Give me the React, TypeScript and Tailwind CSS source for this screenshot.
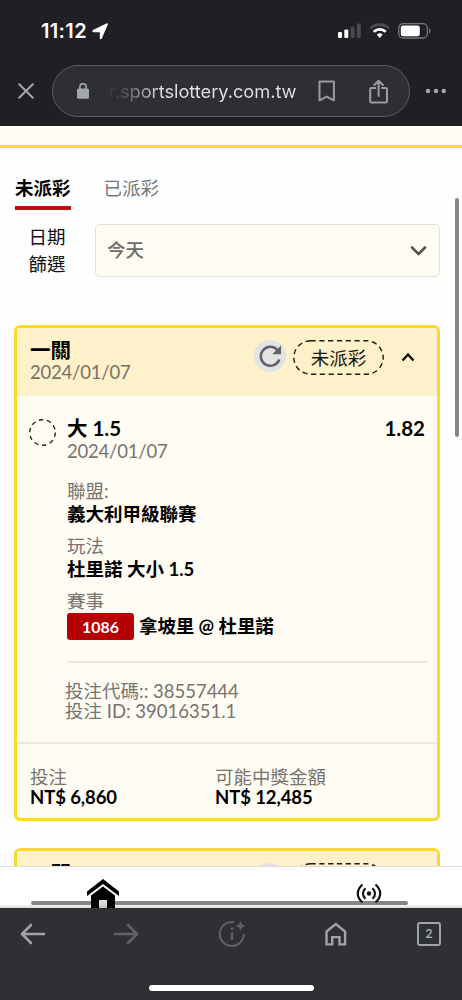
import React from "react";

function StatusBar() {
  return (
    <div className="flex h-[65px] items-start justify-between pl-[41px] pr-[31px] pt-[22px]">
      <div className="flex items-center gap-[5px]">
        <span className="w-[46px] whitespace-nowrap font-['Inter',sans-serif] text-[20px] font-semibold leading-[18px] tracking-[0.35px] text-white">11:12</span>
        <svg width="16" height="17" viewBox="0 0 16 17" fill="#fff">
          <path d="M15.800 1.500 9.800 15.600c-.5 1.100-2 .8-2-.4V9.200H1.600C.2 9.200-.1 7.500 1 7L14.400 .5c1-.4 1.800.2 1.400 1Z" />
        </svg>
      </div>
      <div className="flex items-center">
        <svg width="93" height="18" viewBox="0 0 93 18">
          <rect x="0" y="10" width="4" height="6" rx="1.200" fill="#fff" />
          <rect x="6.300" y="7.500" width="4" height="8.500" rx="1.200" fill="#fff" />
          <rect x="12.500" y="4.500" width="4" height="11.500" rx="1.200" fill="#4b4b4f" />
          <rect x="18.800" y="1.500" width="4" height="14.500" rx="1.200" fill="#4b4b4f" />
          <path d="M32.500 6.200a13.500 13.500 0 0 1 18.500 0" fill="none" stroke="#4b4b4f" strokeWidth="2.800" />
          <path d="M35.700 9.700a9 9 0 0 1 12.100 0" fill="none" stroke="#fff" strokeWidth="2.800" />
          <path d="m41.750 16-3-3.400a4.500 4.500 0 0 1 6 0Z" fill="#fff" />
          <rect x="60.800" y="1.700" width="28.500" height="14.300" rx="4.200" fill="none" stroke="#77777b" strokeWidth="1.300" />
          <rect x="62.800" y="3.500" width="19" height="10.700" rx="2.500" fill="#fff" />
          <path d="M91 6.300c2 .8 2 4.300 0 5.100Z" fill="#77777b" />
        </svg>
      </div>
    </div>
  );
}

function AddressBar() {
  return (
    <div className="flex h-[52px] items-center">
      <svg className="ml-[18px]" width="16" height="16" viewBox="0 0 16 16" stroke="#a3a6ab" strokeWidth="2" strokeLinecap="round">
        <path d="m1.200 1.200 13.600 13.600M14.800 1.200 1.200 14.800" />
      </svg>
      <div className="ml-[18px] flex h-[52px] w-[358px] items-center rounded-full border border-[#5a5c60] bg-[#2e2f33]">
        <svg className="ml-[24px]" width="12" height="16" viewBox="0 0 12 16">
          <rect y="5.500" width="12" height="10.300" rx="1.500" fill="#a3a6ad" />
          <path d="M2.900 6V3.800a3.100 3.100 0 0 1 6.200 0V6" fill="none" stroke="#a3a6ad" strokeWidth="1.600" />
        </svg>
        <span className="ml-[20px] w-[188px] whitespace-nowrap bg-[linear-gradient(90deg,#34353a_0px,#505156_14px,#d5d6d9_48px,#e2e3e6_60px)] bg-clip-text font-['Inter',sans-serif] text-[18.3px] leading-[26px] tracking-[-0.05px] text-transparent">r.sportslottery.com.tw</span>
        <svg className="ml-[20px]" width="20" height="22" viewBox="0 0 20 22" fill="none" stroke="#9a9ca2" strokeWidth="2">
          <path d="M2.500 1.500h14.400v18.800l-7.200-3.700-7.200 3.700Z" strokeLinejoin="round" />
        </svg>
        <svg className="ml-[32px]" width="20" height="25" viewBox="0 0 20 25" fill="none" stroke="#9a9ca2" strokeWidth="2" strokeLinecap="round" strokeLinejoin="round">
          <path d="M6.300 9H2.500a1.300 1.300 0 0 0-1.300 1.300v12A1.300 1.300 0 0 0 2.500 23.600h14.200a1.300 1.300 0 0 0 1.300-1.300v-12A1.300 1.300 0 0 0 16.700 9h-3.800M9.600 17V2M5.300 6l4.300-4.300L13.900 6" />
        </svg>
      </div>
      <svg className="ml-[15px]" width="22" height="6" viewBox="0 0 22 6" fill="#a3a6ab">
        <circle cx="3" cy="3" r="2.200" />
        <circle cx="11" cy="3" r="2.200" />
        <circle cx="18.800" cy="3" r="2.200" />
      </svg>
    </div>
  );
}

function TicketHeader({ title, date }: { title: string; date: string }) {
  return (
    <div className="flex h-[68px] bg-[#fff1c9] pl-[13px]">
      <div className="w-[224px] pt-[10px]">
        <p className="text-[20.5px] font-bold leading-[24px] text-black">{title}</p>
        <p className="text-[18.5px] leading-[20px] tracking-[-0.2px] text-[#77726a]">{date}</p>
      </div>
      <div className="mt-[12px] flex size-[32px] items-center justify-center rounded-full bg-[#e3e3e5]">
        <svg width="24" height="24" viewBox="0 0 24 24" fill="none" stroke="#606164" strokeWidth="2.500">
          <path d="M19.300 5.800A9.500 9.500 0 1 0 21.300 15.500" />
          <path d="M23 1.500v8.700h-8.700Z" fill="#606164" stroke="none" />
        </svg>
      </div>
      <div className="relative ml-[7px] mt-[12px] flex h-[35px] w-[91px] items-center justify-center">
        <svg className="absolute inset-0" width="91" height="35" fill="none" stroke="#1e1b15" strokeWidth="1.400">
          <rect x=".8" y=".8" width="89.400" height="33.400" rx="16.700" strokeDasharray="5.200 3.600" />
        </svg>
        <span className="text-[18.5px] leading-[34px] text-[#191714]">未派彩</span>
      </div>
      <svg className="ml-[17px] mt-[23.5px]" width="14" height="10" viewBox="0 0 14 10" fill="none" stroke="#111" strokeWidth="2.500">
        <path d="m1.500 8.500 5.500-6 5.500 6" />
      </svg>
    </div>
  );
}

function Field({ label, value }: { label: string; value: string }) {
  return (
    <div className="h-[54.5px]">
      <p className="text-[18.5px] leading-[23px] text-[#77736f]">{label}</p>
      <p className="text-[18.5px] font-bold leading-[23px] text-black">{value}</p>
    </div>
  );
}

function Ticket() {
  return (
    <article className="h-[496px] overflow-hidden rounded-[6px] border-[3px] border-[#fdd835] bg-[#fffcf3]">
      <TicketHeader title="一關" date="2024/01/07" />
      <section className="flex h-[346px] pl-[10px] pt-[19px]">
        <svg className="mt-[2px] shrink-0" width="30" height="30" fill="none" stroke="#222" strokeWidth="1.400">
          <circle cx="15.500" cy="15.500" r="12.800" strokeDasharray="4.400 3.640" />
        </svg>
        <div className="ml-[10px] w-[361px]">
          <div className="flex justify-between pr-[3px] text-[20.5px] font-bold leading-[26px] text-black">
            <span>大 1.5</span>
            <span>1.82</span>
          </div>
          <p className="text-[18.5px] leading-[20px] tracking-[-0.2px] text-[#77736f]">2024/01/07</p>
          <div className="mt-[19px]">
            <Field label="聯盟:" value="義大利甲級聯賽" />
            <Field label="玩法" value="杜里諾 大小 1.5" />
            <p className="text-[18.5px] leading-[24px] text-[#77736f]">賽事</p>
            <div className="flex items-center">
              <span className="h-[27px] w-[67px] rounded-[3px] bg-[#b60004] text-center text-[16px] font-bold leading-[28px] text-white">1086</span>
              <span className="ml-[5px] text-[18.5px] font-bold leading-[27px] tracking-[-0.1px] text-black">拿坡里 @ 杜里諾</span>
            </div>
          </div>
          <hr className="mt-[21px] border-t-2 border-[#ebe8e3]" />
          <div className="-ml-[2px] mt-[18px] text-[18.5px] leading-[20px] text-[#77736f]">
            <p>投注代碼:: 38557444</p>
            <p>投注 ID: 39016351.1</p>
          </div>
        </div>
      </section>
      <footer className="flex h-[76px] border-t-2 border-[#ebe8e3] pl-[13px] pt-[23px]">
        <div className="w-[185px]">
          <p className="text-[18.5px] leading-[20px] text-[#77736f]">投注</p>
          <p className="text-[18.5px] font-bold leading-[20px] tracking-[-0.1px] text-black">NT$ 6,860</p>
        </div>
        <div>
          <p className="text-[18.5px] leading-[20px] text-[#77736f]">可能中獎金額</p>
          <p className="text-[18.5px] font-bold leading-[20px] tracking-[-0.1px] text-black">NT$ 12,485</p>
        </div>
      </footer>
    </article>
  );
}

function SiteNav() {
  return (
    <div className="relative h-[42px] overflow-hidden border-t border-[#dededf] bg-white">
      <div className="absolute left-[31px] top-[33.5px] h-[4px] w-[377px] rounded-full bg-[#858585]" />
      <div className="relative flex pl-[86px] pt-[12px]">
        <svg width="34" height="32" viewBox="0 0 34 32">
          <path d="M17 0 33 12.500V17L17 5 1 17v-4.500Z" fill="#000" />
          <path d="M17 7.500 29 16.500V32H5V16.500Z" fill="#000" />
          <rect x="13" y="21" width="8" height="11" fill="#ddd" />
        </svg>
        <svg className="ml-[236px] mt-[4px]" width="26" height="22" viewBox="0 0 26 22" fill="none" stroke="#111" strokeWidth="2.200">
          <path d="M6.500 1.500C.2 7 .2 14 6.500 19.500M19.500 1.500c6.300 5.500 6.300 12.500 0 18M9.500 5.300c-3.400 3.200-3.400 7.200 0 10.400M16.500 5.300c3.400 3.200 3.400 7.200 0 10.400" />
          <circle cx="13" cy="10.500" r="2.200" fill="#111" stroke="none" />
        </svg>
      </div>
      <div className="absolute inset-x-0 bottom-0 h-[4px] bg-gradient-to-b from-transparent to-black/15" />
    </div>
  );
}

function Toolbar() {
  return (
    <div className="flex h-[92px] flex-col items-center justify-between bg-[#2f3034] pb-[9px]">
      <div className="flex h-[52px] w-full items-center pl-[20px]">
        <svg width="26" height="22" viewBox="0 0 26 22" fill="none" stroke="#a1a3a8" strokeWidth="2.600" strokeLinecap="round" strokeLinejoin="round">
          <path d="M24 11H2.500M11 2 2 11l9 9" />
        </svg>
        <svg className="ml-[67px]" width="26" height="22" viewBox="0 0 26 22" fill="none" stroke="#606166" strokeWidth="2.600" strokeLinecap="round" strokeLinejoin="round">
          <path d="M2 11h21.500M15 2l9 9-9 9" />
        </svg>
        <svg className="ml-[79px]" width="28" height="28" viewBox="0 0 28 28" fill="none" stroke="#606166" strokeWidth="2">
          <path d="M16 2.200A12 12 0 1 0 25.800 14" />
          <path d="M14 12.500v7.500" strokeWidth="2.500" />
          <path d="M14 7.500v2.500" strokeWidth="2.500" />
          <path d="m22.500 1 1.400 3.600L27.500 6l-3.600 1.400-1.400 3.600-1.400-3.600L17.500 6l3.600-1.400Z" fill="#606166" stroke="none" />
        </svg>
        <svg className="ml-[78px]" width="24" height="24" viewBox="0 0 24 24" fill="none" stroke="#a1a3a8" strokeWidth="2.400">
          <path d="M2.500 9.500 11.800 2l9.300 7.500v12.900h-5.600v-7.300H8.200v7.300H2.500Z" />
        </svg>
        <div className="ml-[69px] flex size-[24px] items-center justify-center rounded-[3px] border-2 border-[#a1a3a8] font-['Inter',sans-serif] text-[12px] font-medium text-[#b0b2b7]">2</div>
      </div>
      <div className="h-[6px] w-[165px] rounded-full bg-white" />
    </div>
  );
}

export default function App() {
  return (
    <div className="flex h-[1000px] w-[462px] flex-col overflow-hidden bg-[#fefefe] font-['Lato','Noto_Sans_CJK_TC',sans-serif]">
      <header className="h-[126px] shrink-0 bg-[#202024]">
        <StatusBar />
        <AddressBar />
      </header>
      <main className="relative h-[740px] shrink-0 overflow-hidden">
        <div className="h-[22px] border-b-[3px] border-[#fdd835] bg-[#fffcf3]" />
        <nav className="flex h-[62px] gap-[33px] pl-[15px] pt-[26px] text-[18.5px] leading-[28px]">
          <span className="h-[36px] border-b-4 border-[#bd0d12] font-bold text-black">未派彩</span>
          <span className="text-[#77777a]">已派彩</span>
        </nav>
        <div className="flex h-[67px] pt-[14px]">
          <p className="w-[95px] pl-[28.5px] text-[18.5px] leading-[27px] text-[#111]">日期<br />篩選</p>
          <div className="flex h-[53px] w-[345px] items-center justify-between rounded-[5px] border border-[#e1e0d8] bg-[#fffcf3] pl-[11px] pr-[12.5px]">
            <span className="text-[18.5px] font-medium text-[#6d6a67]">今天</span>
            <svg className="mt-[1px]" width="17" height="12" viewBox="0 0 17 12" fill="none" stroke="#555451" strokeWidth="2.600" strokeLinecap="round">
              <path d="m2 2.500 6.500 6.500L15 2.500" />
            </svg>
          </div>
        </div>
        <div className="ml-[14px] mt-[48px] w-[426px]">
          <Ticket />
          <article className="mt-[27px] h-[80px] overflow-hidden rounded-[6px] border-[3px] border-[#fdd835]">
            <TicketHeader title="二關" date="2024/01/07" />
          </article>
        </div>
        <div className="absolute left-[455px] top-[72px] h-[239px] w-[4px] rounded-full bg-[#858585]" />
      </main>
      <SiteNav />
      <Toolbar />
    </div>
  );
}
